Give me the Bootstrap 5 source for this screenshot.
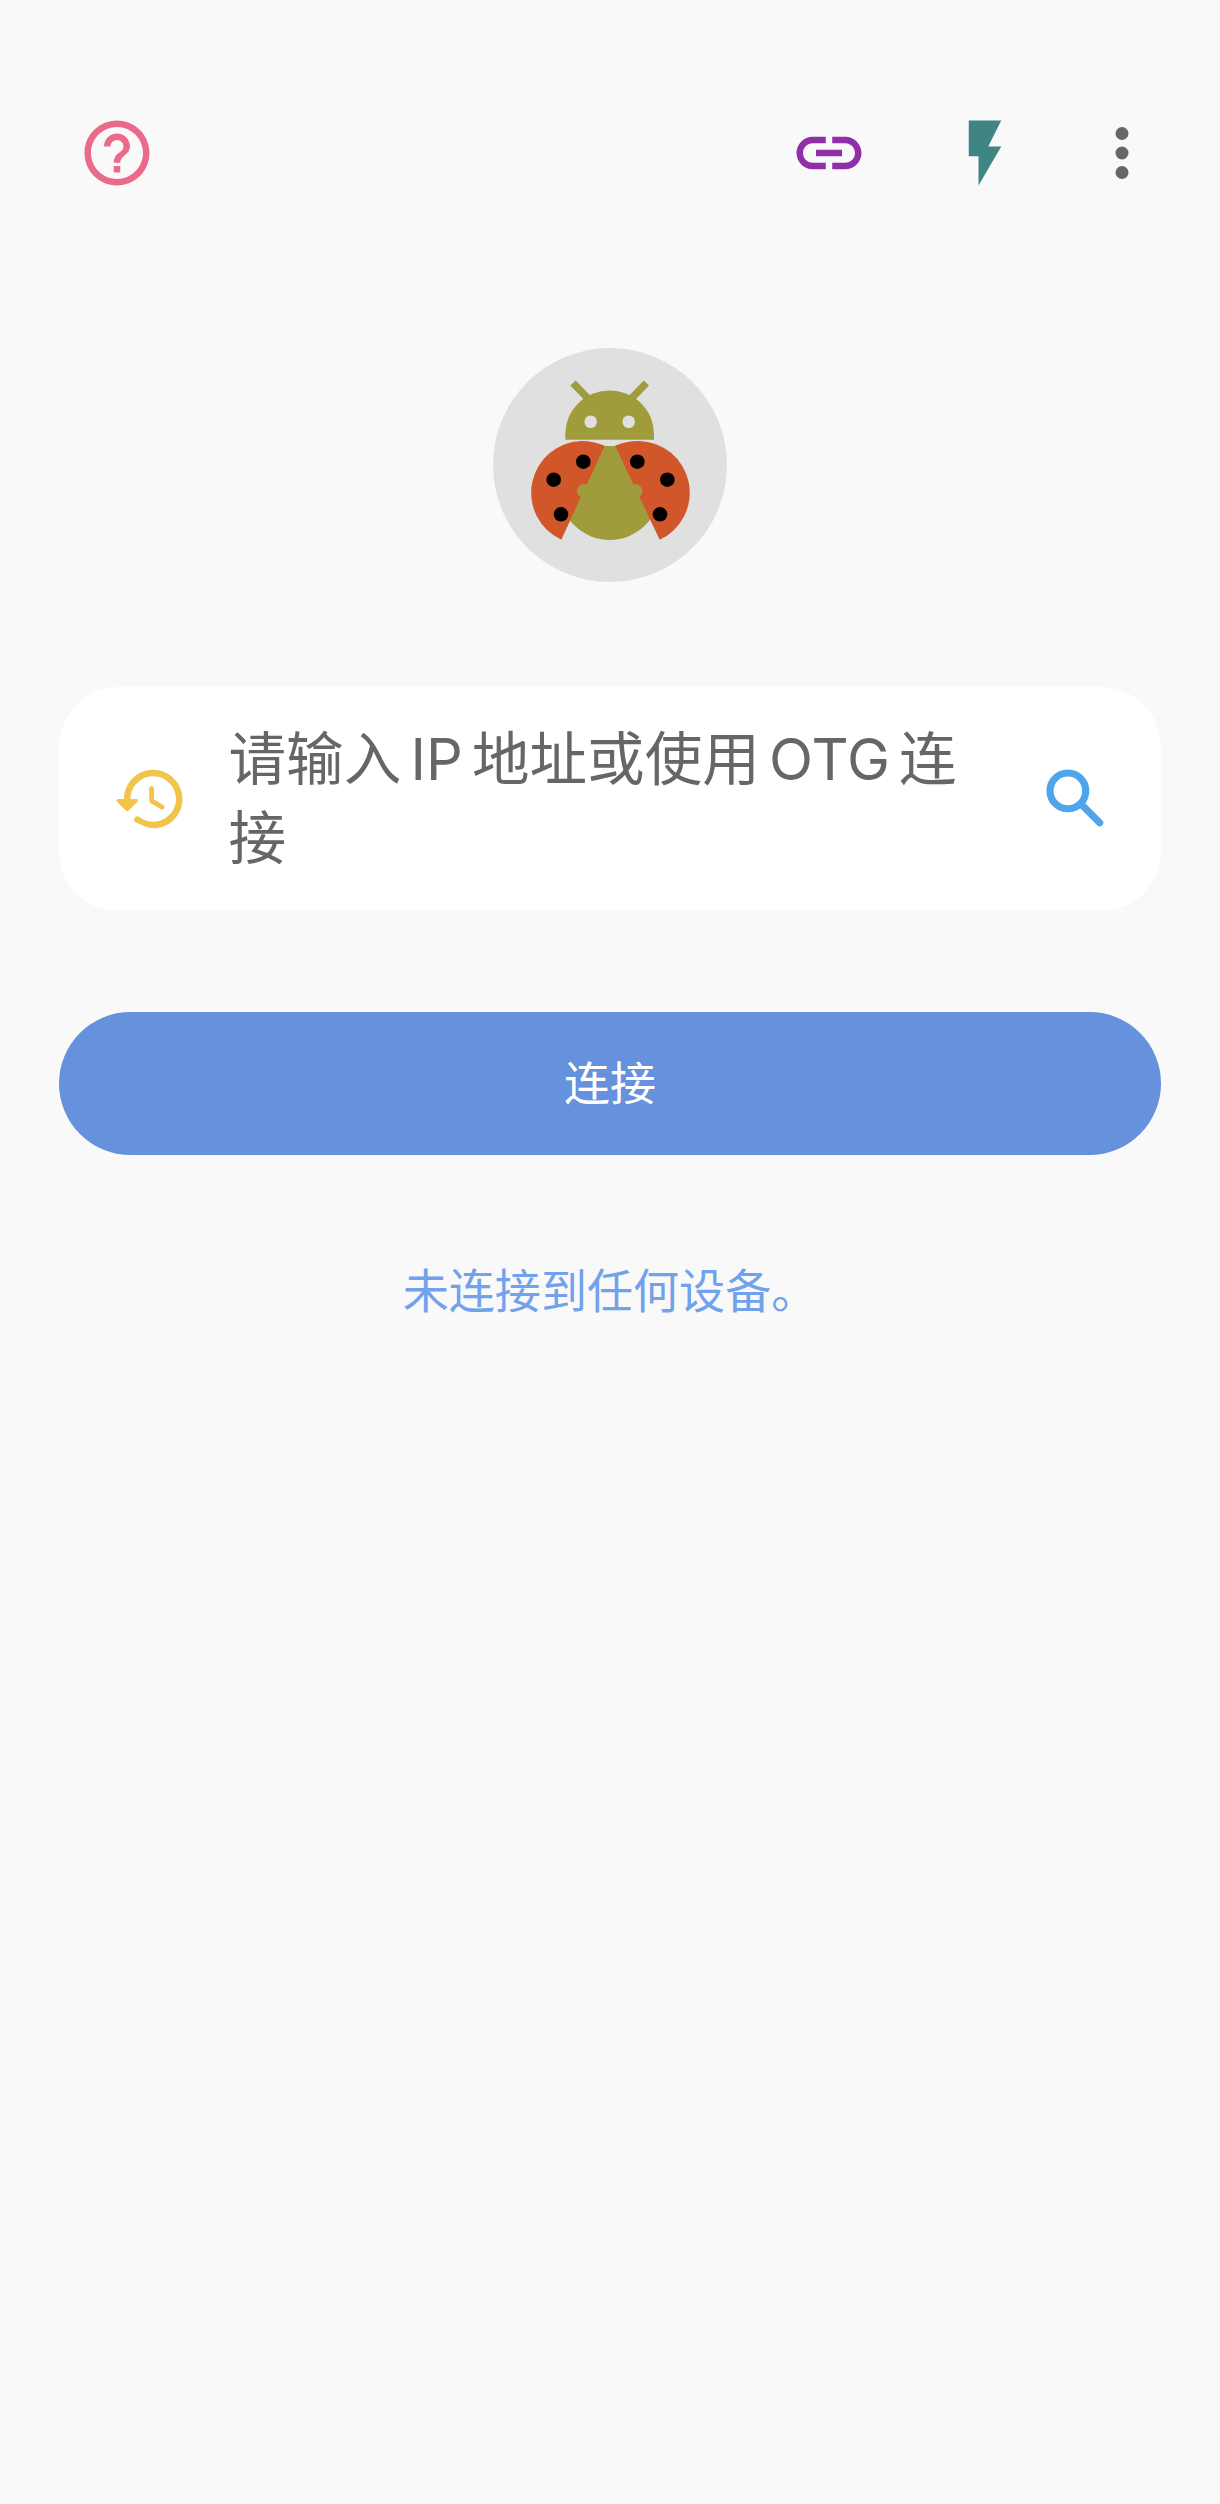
<!DOCTYPE html>
<html lang="zh-CN">
<head>
  <meta charset="UTF-8">
  <title>连接</title>
  <link href="https://cdn.jsdelivr.net/npm/bootstrap@5.3.0/dist/css/bootstrap.min.css" rel="stylesheet">
  <style>
    body {
      background: #f9f9f9;
      font-family: Roboto, "Noto Sans CJK SC", sans-serif;
      height: 2504px;
    }
    .top-bar { padding: 114px 59px 0 78px; }
    .top-bar svg { width: 78px; height: 78px; display: block; }
    .link-ico { margin-right: 77.5px; }
    .flash-ico { margin-right: 59.5px; }
    .logo-wrap { margin-top: 156px; }
    .logo-disc { width: 234px; height: 234px; background: #e0e0e0; }
    .ip-box {
      margin: 105px 59px 0;
      height: 224px;
      background: #fff;
      border-radius: 60px;
      padding: 0 46px 0 52px;
    }
    .ip-box svg { width: 78px; height: 78px; flex: none; }
    .ip-hint {
      color: #666;
      font-family: Inter, "Noto Sans CJK SC", sans-serif;
      font-size: 57.6px;
      line-height: 79px;
      word-spacing: -7px;
      margin: 0 36px 0 39.5px;
    }
    .connect-btn {
      display: block;
      width: 1102px;
      height: 143px;
      margin: 101px 59px 0;
      padding-top: 8px;
      background: #6591dd;
      border: 0;
      border-radius: 72px;
      color: #fff;
      font-size: 46px;
    }
    .connect-btn:hover, .connect-btn:active { background: #6591dd !important; color: #fff !important; }
    .status-text {
      margin-top: 106px;
      color: #72a2ec;
      font-size: 46.08px;
      line-height: 62px;
    }
  </style>
</head>
<body>
  <div class="top-bar d-flex align-items-center">
    <svg class="me-auto" viewBox="0 0 24 24" fill="#ea6a8a"><path d="M11 18h2v-2h-2v2zm1-16C6.48 2 2 6.48 2 12s4.48 10 10 10 10-4.48 10-10S17.52 2 12 2zm0 18c-4.41 0-8-3.59-8-8s3.59-8 8-8 8 3.59 8 8-3.59 8-8 8zm0-14c-2.21 0-4 1.79-4 4h2c0-1.1.9-2 2-2s2 .9 2 2c0 2-3 1.75-3 5h2c0-2.25 3-2.5 3-5 0-2.21-1.79-4-4-4z"/></svg>
    <svg class="link-ico" viewBox="0 0 24 24" fill="#9030a8"><path d="M17 7h-4v2h4c1.65 0 3 1.35 3 3s-1.35 3-3 3h-4v2h4c2.76 0 5-2.24 5-5s-2.24-5-5-5zm-6 8H7c-1.65 0-3-1.35-3-3s1.35-3 3-3h4V7H7c-2.76 0-5 2.24-5 5s2.24 5 5 5h4v-2zm-3-4h8v2H8z"/></svg>
    <svg class="flash-ico" viewBox="0 0 24 24" fill="#3f8583"><path d="M7 2v11h3v9l7-12h-4l4-8z"/></svg>
    <svg viewBox="0 0 24 24" fill="#666"><circle cx="12" cy="6" r="2"/><circle cx="12" cy="12" r="2"/><circle cx="12" cy="18" r="2"/></svg>
  </div>

  <div class="logo-wrap d-flex justify-content-center">
    <div class="logo-disc rounded-circle">
      <svg class="d-block" width="234" height="234" viewBox="0 0 234 234">
        <!-- antennae + head -->
        <path d="M80 35L97 52.500M153.400 35L136.500 52.500" stroke="#a09c3c" stroke-width="7.500" fill="none"/>
        <path d="M72.300 91.700V86A44.300 43.500 0 0 1 161 86V91.700z" fill="#a09c3c"/>
        <circle cx="97.700" cy="73.700" r="6.300" fill="#e0e0e0"/>
        <circle cx="135.700" cy="73.700" r="6.300" fill="#e0e0e0"/>
        <!-- body, wings go over it -->
        <path d="M100 98H134L166.700 142A50 50 0 0 1 66.700 142Z" fill="#a09c3c"/>
        <path d="M111.700 97.700L68.300 191.700A51.800 51.800 0 0 1 88 92.900C97 92.900 104.500 94.500 111.700 97.700z" fill="#d1572b"/>
        <path d="M122 97.700L166.700 191.700A51.800 51.800 0 0 0 146 92.900C137 92.900 129.500 94.500 122 97.700z" fill="#d1572b"/>
        <!-- bumps sit on top of the wing edge -->
        <circle cx="91" cy="143" r="7" fill="#a09c3c"/>
        <circle cx="142.300" cy="143" r="7" fill="#a09c3c"/>
        <circle cx="90.300" cy="113.700" r="7.300"/>
        <circle cx="60.700" cy="131.700" r="7.300"/>
        <circle cx="68" cy="166.300" r="7.300"/>
        <circle cx="144.300" cy="113.700" r="7.300"/>
        <circle cx="174.300" cy="131.700" r="7.300"/>
        <circle cx="167" cy="166.300" r="7.300"/>
      </svg>
    </div>
  </div>

  <div class="ip-box d-flex align-items-center">
    <svg viewBox="0 0 24 24" fill="#f3c44c"><path d="M13.260 3C8.170 2.860 4 6.950 4 12H2.210c-.45 0-.67.54-.35.85l2.790 2.800c.2.2.51.2.71 0l2.790-2.800c.31-.31.09-.85-.36-.85H6c0-3.900 3.180-7.050 7.100-7 3.700.05 6.850 3.170 6.900 6.870.05 3.900-3.100 7.130-7 7.130-1.610 0-3.100-.55-4.280-1.480-.4-.31-.96-.28-1.320.08-.42.42-.39 1.130.08 1.500C9.980 20.290 11.400 21 13 21c5.050 0 9.140-4.170 9-9.260-.13-4.690-4.050-8.610-8.740-8.740zm-.76 5c-.41 0-.75.34-.75.75v3.680c0 .35.19.68.49.86l3.120 1.850c.36.21.82.09 1.030-.26.21-.36.09-.82-.26-1.030l-2.880-1.710v-3.400c0-.4-.34-.74-.75-.74z"/></svg>
    <div class="ip-hint flex-grow-1">请输入 IP 地址或使用 OTG 连接</div>
    <svg viewBox="0 0 24 24" fill="none" stroke="#4fa5ec" stroke-width="2.200" stroke-linecap="round"><circle cx="9.500" cy="9.500" r="5.500"/><path d="M14 14L19.300 19.300"/></svg>
  </div>

  <button type="button" class="btn connect-btn">连接</button>

  <p class="status-text text-center">未连接到任何设备。</p>

  <script src="https://cdn.jsdelivr.net/npm/bootstrap@5.3.0/dist/js/bootstrap.bundle.min.js"></script>
</body>
</html>
